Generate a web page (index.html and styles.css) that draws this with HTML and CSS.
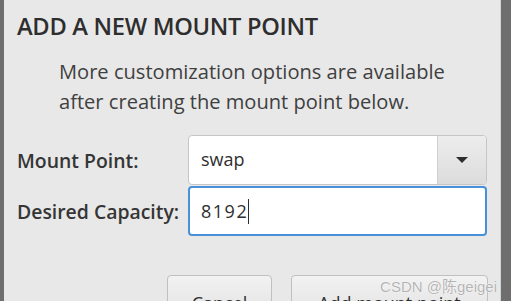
FILE: index.html
```html
<!DOCTYPE html>
<html lang="en">
<head>
    <meta charset="UTF-8">
    <meta name="viewport" content="width=device-width, initial-scale=1.0">
    <title>Add a New Mount Point</title>
    <link rel="stylesheet" href="styles.css">
</head>
<body>

    <!-- Dialog panel -->
    <div class="dialog">
        <h1 class="dialog-title">ADD A NEW MOUNT POINT</h1>

        <p class="intro">More customization options are available<br>after creating the mount point below.</p>

        <!-- Form rows -->
        <div class="form-grid">
            <label class="field-label">Mount Point:</label>
            <div class="combo">
                <span class="combo-value">swap</span>
                <div class="combo-button">
                    <span class="arrow"></span>
                </div>
            </div>

            <label class="field-label">Desired Capacity:</label>
            <div class="entry">
                <span class="entry-value">8192</span><span class="cursor"></span>
            </div>
        </div>

        <!-- Buttons -->
        <div class="actions">
            <button class="btn btn-cancel">Cancel</button>
            <button class="btn btn-add">Add mount point</button>
            <span class="watermark">CSDN @陈geigei</span>
        </div>
    </div>

</body>
</html>
```

FILE: styles.css
```css
/* Basic reset */
* {
    margin: 0;
    padding: 0;
    box-sizing: border-box;
}

body {
    font-family: "Open Sans", "Noto Sans", sans-serif;
    background-color: #6e6e6e;
    height: 301px;
    overflow: hidden;
}

/* Dialog panel */
.dialog {
    margin-left: 4px;
    width: 497px;
    height: 301px;
    overflow: hidden;
    background-color: #e8e8e8;
    border-right: 1px solid #d2d2d2;
    padding: 10px 13px 0 13px;
    color: #3c3c3c;
}

.dialog-title {
    font-size: 23.7px;
    font-weight: 600;
    letter-spacing: -0.3px;
    line-height: 32px;
    color: #2e2e2e;
}

.intro {
    margin-top: 15px;
    padding-left: 42px;
    font-size: 20.1px;
    line-height: 30px;
    color: #404040;
}

/* Form grid */
.form-grid {
    display: grid;
    grid-template-columns: 171px 299px;
    grid-template-rows: 50px 50px;
    row-gap: 1px;
    align-items: center;
    margin-top: 18px;
}

.field-label {
    font-size: 19.4px;
    font-weight: 600;
    color: #353535;
}

.combo {
    display: flex;
    height: 50px;
    background-color: #fff;
    border: 1px solid #c6c6c6;
    border-radius: 4px;
    overflow: hidden;
}

.combo-value {
    flex: 1;
    font-size: 18px;
    padding-left: 12px;
    line-height: 47px;
    color: #2e2e2e;
}

.combo-button {
    width: 49px;
    display: flex;
    align-items: center;
    justify-content: center;
    border-left: 1px solid #cfcfcf;
    background: linear-gradient(#ededed, #dcdcdc);
}

.arrow {
    width: 0;
    height: 0;
    border-left: 6px solid transparent;
    border-right: 6px solid transparent;
    border-top: 6px solid #2e2e2e;
}

.entry {
    display: flex;
    align-items: center;
    height: 50px;
    background-color: #fff;
    border: 2px solid #4a90d9;
    border-radius: 4px;
    padding-left: 11px;
}

.entry-value {
    font-size: 18px;
    letter-spacing: 1.5px;
    color: #2e2e2e;
}

.cursor {
    width: 1px;
    height: 25px;
    background-color: #2e2e2e;
}

/* Buttons row */
.actions {
    position: relative;
    display: flex;
    justify-content: flex-end;
    gap: 19px;
    margin-top: 39px;
    width: 471px;
}

.btn {
    height: 44px;
    font-family: inherit;
    font-size: 18px;
    color: #2e2e2e;
    border: 1px solid #c0c0c0;
    border-radius: 4px;
    background: linear-gradient(#f2f2f2, #e2e2e2);
    padding-top: 12px;
}

.btn-cancel {
    width: 105px;
}

.btn-add {
    width: 197px;
}

.watermark {
    position: absolute;
    right: -9px;
    top: 0;
    font-family: "Liberation Sans", "Noto Sans CJK SC", sans-serif;
    font-size: 15px;
    color: #b4b4b4;
    text-shadow: 0 0 1px #fff, 0 0 1px #fff;
}
```
